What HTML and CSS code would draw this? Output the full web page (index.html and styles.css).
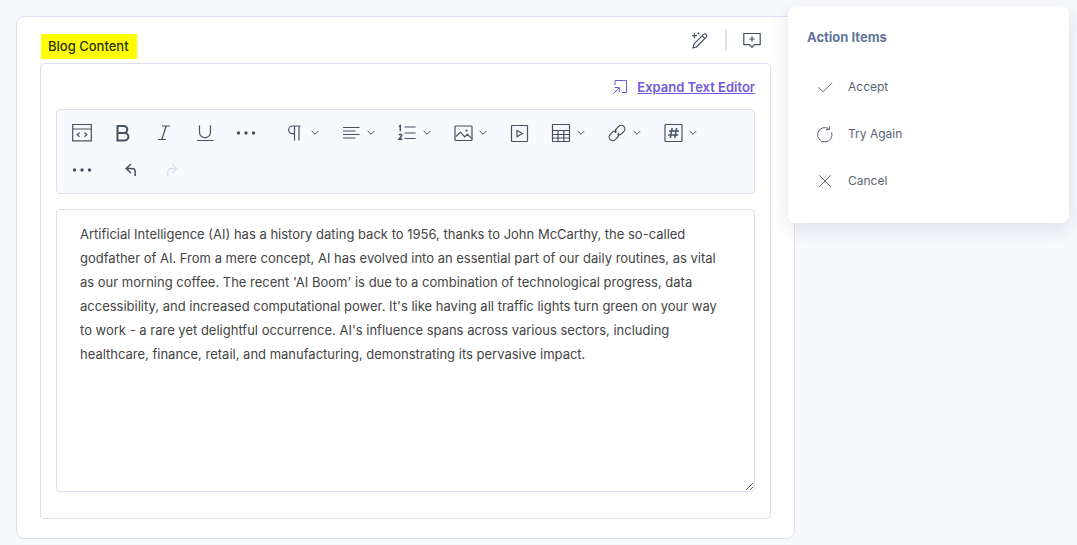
FILE: index.html
```html
<!DOCTYPE html>
<html lang="en">
<head>
<meta charset="utf-8">
<meta name="viewport" content="width=device-width, initial-scale=1">
<title>Blog Content</title>
<link rel="stylesheet" href="styles.css">
</head>
<body>
<main class="card">
  <header class="card-header">
    <label class="card-label" for="blog">Blog Content</label>
    <div class="card-tools">
      <button class="icon-button" type="button" aria-label="Generate">
        <svg class="icon" viewBox="0 0 20 20"><path d="M3 18l.8-3.8L13.6 4.4q1.3-1.1 2.6 0 1.2 1.4 0 2.7L6.4 17zM12.2 5.9l2.6 2.6M4.5 3.2v5M2 5.7h5M8.5 2.5v2M7.5 3.5h2"/></svg>
      </button>
      <span class="divider"></span>
      <button class="icon-button" type="button" aria-label="Add comment">
        <svg class="icon" viewBox="0 0 20 20"><path d="M1.8 3.5h16.4v11.2h-5.7L10 17.4l-2.5-2.7H1.8zM10 6.3v5.4M7.3 9h5.4"/></svg>
      </button>
    </div>
  </header>
  <section class="editor">
    <a class="expand" href="#blog">
      <svg class="expand-icon" viewBox="0 0 16 16"><path d="M3 6V1.5h11.5v12H9.5"/><path d="M1.5 14.5L7 9M2.5 8.5H7.4v4.6"/></svg>
      <span>Expand Text Editor</span>
    </a>
    <div class="toolbar" role="toolbar" aria-label="Formatting">
      <div class="group">
        <button class="tool" type="button" aria-label="Source code"><svg class="icon" viewBox="0 0 20 20"><path d="M.7 1.5h18.6v16.3H.7zM.7 6h18.6M7.5 9.5L5.2 11.7l2.3 2.2M12.5 9.5l2.3 2.2-2.3 2.2"/></svg></button>
        <button class="tool" type="button" aria-label="Bold"><svg class="icon bold" viewBox="0 0 20 20"><path d="M4.5 3h6.3a3.5 3.5 0 010 7H4.5zM4.5 10h7.2a3.7 3.7 0 010 7.4H4.5z"/></svg></button>
        <button class="tool" type="button" aria-label="Italic"><svg class="icon" viewBox="0 0 20 20"><path d="M8 3h8M4 16.5h8M12.2 3L7.8 16.5"/></svg></button>
        <button class="tool" type="button" aria-label="Underline"><svg class="icon" viewBox="0 0 20 20"><path d="M4.5 2.5v6.8a5.5 5.5 0 0011 0V2.5M2 17.5h16.5"/></svg></button>
        <button class="tool" type="button" aria-label="More text options"><svg class="icon solid" viewBox="0 0 20 20"><circle cx="2.5" cy="10" r="1.7"/><circle cx="10" cy="10" r="1.7"/><circle cx="17.5" cy="10" r="1.7"/></svg></button>
      </div>
      <div class="group">
        <button class="tool menu" type="button" aria-label="Paragraph"><svg class="icon" viewBox="0 0 20 20"><path d="M15.5 3H7.5a3.8 3.8 0 000 7.7H9.5M9.5 3v14.5M14 3v14.5"/></svg><svg class="chevron" viewBox="0 0 8 6"><path d="M.7 1L4 4.3 7.3 1"/></svg></button>
        <button class="tool menu" type="button" aria-label="Align"><svg class="icon" viewBox="0 0 20 20"><path d="M2 4.5h16.5M2 8h12.5M2 11.5h16.5M2 15h12.5"/></svg><svg class="chevron" viewBox="0 0 8 6"><path d="M.7 1L4 4.3 7.3 1"/></svg></button>
        <button class="tool menu" type="button" aria-label="Numbered list"><svg class="icon" viewBox="0 0 20 20"><path d="M7.5 4h11.2M7.5 10h11.2M7.5 15.5h11.2"/><path class="thick" d="M2 3.5l1.3-.8v5.5M2 12.3q.4-1.2 1.5-1.1 1.7.4 1 1.8L2 16.2h3.3"/></svg><svg class="chevron" viewBox="0 0 8 6"><path d="M.7 1L4 4.3 7.3 1"/></svg></button>
        <button class="tool menu" type="button" aria-label="Image"><svg class="icon" viewBox="0 0 20 20"><rect x="2" y="3" width="17" height="14.5" rx=".7"/><path d="M3 13.5l4.3-4.4 4.4 4.7 2.8-2.5 4 4"/><circle cx="13.5" cy="7.5" r=".5"/></svg><svg class="chevron" viewBox="0 0 8 6"><path d="M.7 1L4 4.3 7.3 1"/></svg></button>
        <button class="tool wide" type="button" aria-label="Video"><svg class="icon" viewBox="0 0 20 20"><rect x="2.5" y="2.5" width="16" height="16" rx=".7"/><path d="M8 7.5v6.2l5.4-3.1z"/></svg></button>
        <button class="tool menu" type="button" aria-label="Table"><svg class="icon" viewBox="0 0 20 20"><rect x="1.5" y="1.5" width="17" height="17" rx=".7"/><path d="M1.5 7.5h17M1.5 11.5h17M1.5 15h17M7 7.5v11M12.8 7.5v11"/></svg><svg class="chevron" viewBox="0 0 8 6"><path d="M.7 1L4 4.3 7.3 1"/></svg></button>
        <button class="tool menu" type="button" aria-label="Link"><svg class="icon" viewBox="0 0 20 20"><path d="M8.7 9.9a3.6 3.6 0 01.8-4.2l2.2-2.3a3.6 3.6 0 015.1 5.1l-2.3 2.3a3.6 3.6 0 01-4.2.6M11.3 9.9a3.6 3.6 0 01-.8 4.4l-2.2 2.3a3.6 3.6 0 01-5.1-5.1l2.3-2.3a3.6 3.6 0 014.2-.6"/></svg><svg class="chevron" viewBox="0 0 8 6"><path d="M.7 1L4 4.3 7.3 1"/></svg></button>
        <button class="tool menu" type="button" aria-label="Placeholder"><svg class="icon" viewBox="0 0 20 20"><rect x="2" y="1.5" width="17" height="17" rx=".7"/><path class="thick" d="M9.2 5L7.3 15M13.7 5l-1.9 10M6 8h10M5.2 12h10"/></svg><svg class="chevron" viewBox="0 0 8 6"><path d="M.7 1L4 4.3 7.3 1"/></svg></button>
      </div>
      <div class="group">
        <button class="tool" type="button" aria-label="More options"><svg class="icon solid" viewBox="0 0 20 20"><circle cx="2.5" cy="10" r="1.7"/><circle cx="10" cy="10" r="1.7"/><circle cx="17.5" cy="10" r="1.7"/></svg></button>
      </div>
      <div class="group">
        <button class="tool" type="button" aria-label="Undo"><svg class="icon thick" viewBox="0 0 20 20"><path d="M10 4L5.2 8.5 10 13M5.2 8.5h5.6q3.4 0 3.4 3.4v4"/></svg></button>
        <button class="tool" type="button" aria-label="Redo" disabled><svg class="icon thick" viewBox="0 0 20 20"><path d="M10 4l4.8 4.5L10 13M14.8 8.5H9.2q-3.4 0-3.4 3.4v4"/></svg></button>
      </div>
    </div>
    <textarea class="content" id="blog" spellcheck="false">Artificial Intelligence (AI) has a history dating back to 1956, thanks to John McCarthy, the so-called godfather of AI. From a mere concept, AI has evolved into an essential part of our daily routines, as vital as our morning coffee. The recent 'AI Boom' is due to a combination of technological progress, data accessibility, and increased computational power. It's like having all traffic lights turn green on your way to work - a rare yet delightful occurrence. AI's influence spans across various sectors, including healthcare, finance, retail, and manufacturing, demonstrating its pervasive impact.</textarea>
  </section>
</main>
<aside class="actions">
  <h2 class="actions-title">Action Items</h2>
  <button class="action" type="button"><svg class="action-icon" viewBox="0 0 18 18"><path d="M2.5 9.3L7 13.8 16 4.8"/></svg>Accept</button>
  <button class="action" type="button"><svg class="action-icon" viewBox="0 0 18 18"><path d="M15.6 7.3A7.2 7.2 0 1 1 12.6 3.6M13.4 1.2v3.5H9.8"/></svg>Try Again</button>
  <button class="action" type="button"><svg class="action-icon" viewBox="0 0 18 18"><path d="M3.3 3.3l11.4 11.4M14.7 3.3L3.3 14.7"/></svg>Cancel</button>
</aside>
</body>
</html>
```
FILE: styles.css
```css
* { box-sizing: border-box; }

body {
  margin: 0;
  padding: 16px 282px 6px 16px;
  background: #f8f9fd;
  color: #465063;
  font-family: Inter, "Liberation Sans", sans-serif;
  font-size: 13px;
}

button {
  display: flex;
  align-items: center;
  justify-content: center;
  padding: 0;
  border: 0;
  background: none;
  color: inherit;
  font: inherit;
  cursor: pointer;
}

svg {
  flex: none;
  fill: none;
  stroke: currentColor;
}

.card {
  padding: 12px 23px 19px;
  border: 1px solid #dbe1f0;
  border-radius: 8px;
  background: #fff;
}

.card-header {
  display: flex;
  justify-content: space-between;
  align-items: flex-start;
  height: 34px;
}

.card-label {
  margin: 5px 0 0 1px;
  padding: 0 8px 0 7px;
  background: #ff0;
  color: #2e2f0c;
  font-weight: 500;
  line-height: 25px;
}

.card-tools {
  display: flex;
  align-items: center;
  gap: 15px;
  padding-right: 9px;
}

.divider {
  width: 2px;
  height: 22px;
  background: #dbe1f0;
}

.icon {
  width: 20px;
  height: 20px;
  stroke-width: 1.2;
}

.bold { stroke-width: 2; }
.thick { stroke-width: 1.5; }
.solid { fill: currentColor; stroke: none; }

.editor {
  display: flex;
  flex-direction: column;
  padding: 15px 15px 26px;
  border: 1px solid #dbe1f0;
  border-radius: 4px;
}

.expand {
  display: flex;
  align-items: center;
  align-self: flex-end;
  gap: 9px;
  margin-bottom: 14px;
  color: #7259dc;
  font-weight: 600;
  line-height: 16px;
  text-decoration: none;
}

.expand span { text-decoration: underline; }

.expand-icon {
  width: 16px;
  height: 16px;
}

.toolbar {
  display: flex;
  flex-wrap: wrap;
  column-gap: 8px;
  margin-bottom: 15px;
  padding: 4px 4px 5px;
  border: 1px solid #dbe1f0;
  border-radius: 4px;
  background: #f8f9fd;
}

.group { display: flex; }

.tool {
  width: 41px;
  height: 37px;
}

.wide { width: 42px; }

.tool:disabled { color: #dbe1ec; }

.menu {
  justify-content: flex-start;
  gap: 6px;
  width: 56px;
  padding-left: 11px;
}

.chevron {
  width: 8px;
  height: 6px;
}

.content {
  display: block;
  width: 100%;
  height: 283px;
  padding: 12px 23px;
  border: 1px solid #dbe1f0;
  border-radius: 4px;
  outline: 0;
  background: #fff;
  color: #444;
  font: inherit;
  line-height: 24px;
  resize: vertical;
}

.actions {
  position: absolute;
  top: 6px;
  right: 8px;
  width: 281px;
  padding: 21px 19px 19px;
  border-radius: 8px;
  background: #fff;
  box-shadow: 0 6px 20px rgba(30, 35, 60, .12);
}

.actions-title {
  margin: 0 0 15px;
  color: #63759b;
  font-size: 13px;
  font-weight: 700;
  line-height: 21px;
}

.action {
  justify-content: flex-start;
  gap: 14px;
  width: 100%;
  height: 47px;
  padding-left: 9px;
  color: #5b6474;
  font-size: 12px;
}

.action-icon {
  width: 18px;
  height: 18px;
}
```
